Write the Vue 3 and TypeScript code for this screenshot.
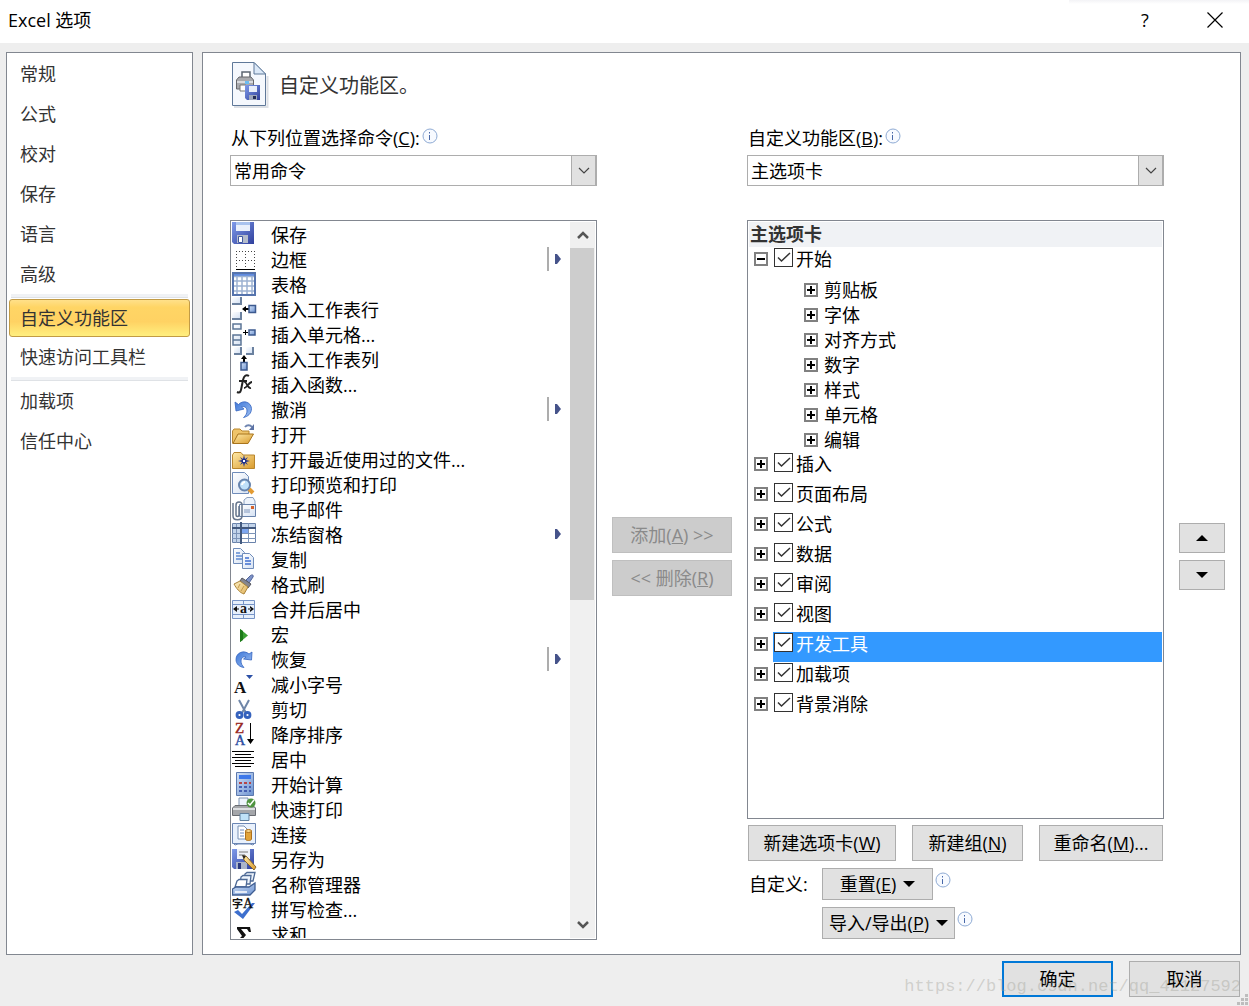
<script setup lang="ts">
import { ref } from 'vue'

interface Command {
  label: string
  icon: string
  menu?: 'split' | 'plain'
}

interface Tab {
  label: string
  checked: boolean
  groups?: string[]
}

const navGroups: string[][] = [
  ['常规', '公式', '校对', '保存', '语言', '高级'],
  ['自定义功能区', '快速访问工具栏'],
  ['加载项', '信任中心'],
]
const activeNav = ref('自定义功能区')

const folder = '<path d="M.5 8L2 5.500H9L11 8H22.500V21.500H.5Z" fill="url(#gold)" stroke="#b8862e"/>'
const page = (x: number, y: number, w: number, h: number): string =>
  `<path d="M${x} ${y}h${w - 4}l4 4v${h - 4}h-${w}z" fill="url(#paper)" stroke="#6f8cba"/>`
const cell = (x: number, y: number, w: number, h: number): string =>
  `<path d="M${x} ${y}h${w}v${h}h-${w}z" fill="#6b819f"/><path d="M${x} ${y}h${w - 2}v${h - 2}h-${w - 2}z" fill="url(#paper)"/>`

const commands: Command[] = [
  {
    label: '保存',
    icon: '<path d="M0 0H22V22H2L0 20Z" fill="url(#blue)"/><path d="M4 0H18V9H4Z" fill="#e9f0fb"/><path d="M4 0H18V3H4Z" fill="#a9c3ee"/><path d="M5 13H16V21H5Z" fill="#b4bccb"/><path d="M6.500 14.500H10.500V20.500H6.500Z" fill="#fff" stroke="#4059a0"/>',
  },
  {
    label: '边框',
    icon: '<path d="M4 4.500H23M4 13.500H23M4.500 4V21M13.500 4V21M22.500 4V21" stroke="#444" stroke-dasharray="1 2" fill="none"/><path d="M4 22H23V23H4Z" fill="#000"/>',
  },
  {
    label: '表格',
    icon: '<path d="M1 1H23V23H1Z" fill="#fff"/><path d="M0 0H24V4H0Z" fill="#5f8adf"/><path d="M0 4.500H24M0 9H24M0 14H24M0 19H24M5 4V24M10 4V24M15 4V24M20 4V24" stroke="#9db2d2" stroke-width="1.500" fill="none"/><path d="M1 1H23V23H1Z" fill="none" stroke="#5674ad" stroke-width="2"/>',
  },
  {
    label: '插入工作表行',
    icon: cell(0, 0, 10, 8) + cell(0, 15, 10, 8) + '<path d="M10 12L14 9V11H17V13H14V15Z" fill="#000"/><path d="M17 8.500H23.500V15.500H17Z" fill="url(#sky)" stroke="#3c5a8f" stroke-width="1.500"/>',
  },
  {
    label: '插入单元格...',
    icon: '<path d="M1 2H9V7H1ZM1 13H9V18H1ZM1 18H9V23H1Z" fill="url(#paper)" stroke="#5c7596" stroke-width="1.500"/><path d="M11 10H16V11H11ZM13 8H14V13H13Z" fill="#000"/><path d="M17 8H23V13H17Z" fill="url(#sky)" stroke="#3c5a8f" stroke-width="1.500"/>',
  },
  {
    label: '插入工作表列',
    icon: cell(2, 0, 8, 8) + cell(14, 0, 8, 8) + '<path d="M12 8L9 12H11V15H13V12H15Z" fill="#000"/><path d="M9 15.500H15V23H9Z" fill="url(#sky)" stroke="#3c5a8f" stroke-width="1.500"/>',
  },
  {
    label: '插入函数...',
    icon: '<path d="M5 20C9 22 9 18 10 13L11 8C12 4 14 2 17 4M7 9H15" stroke="#222" fill="none" stroke-width="2"/><path d="M12 10C15 9 15 17 19 16M20 10C17 10 15 16 12 16" stroke="#222" fill="none" stroke-width="1.800"/>',
  },
  {
    label: '撤消',
    icon: '<path d="M3 5L4 14L12 12L9.500 10C12 9 15 10 15 14C15 16.500 13.500 19 11.500 20.500C16 19.500 19.500 16.500 19.500 11.500C19 5 11 2.500 6.500 7.500Z" fill="url(#arrow)" stroke="#3565c0" stroke-width=".8"/>',
  },
  {
    label: '打开',
    icon: '<path d="M.5 21.500V9L2 7H8L10 9H17V12" fill="#efc46a" stroke="#b8862e"/><path d="M1 21.500L6 12H21.500L16 21.500Z" fill="url(#gold)" stroke="#a8741c"/><path d="M13 5C15 2.500 18 2.500 20 5" fill="none" stroke="#6e84b0" stroke-width="2"/><path d="M22 2V8H17Z" fill="#5b72a4"/>',
  },
  {
    label: '打开最近使用过的文件...',
    icon: folder + '<path d="M12 8L13 12L16 10L14 13L18 14L14 15L16 18L13 16L12 20L11 16L8 18L10 15L6 14L10 13L8 10L11 12Z" fill="#1f318e"/><path d="M11 13H13V15H11Z" fill="#fff"/>',
  },
  {
    label: '打印预览和打印',
    icon: page(0.5, 0.5, 16, 21) + '<path d="M17 17L21 21" stroke="#e39b32" stroke-width="4"/><circle cx="12.500" cy="13" r="5.500" fill="#bfe0fa" stroke="#6684ae" stroke-width="2"/><path d="M10 13C10 11 12 10 13 10" stroke="#fff" fill="none" stroke-width="2"/>',
  },
  {
    label: '电子邮件',
    icon: '<path d="M12 3L15 .5H21L23 4V10H12Z" fill="#edf3fb" stroke="#8aa0c0"/><path d="M7.500 7.500H23.500V19.500H7.500Z" fill="url(#paper)" stroke="#6882ab"/><path d="M19 9H22V12H19Z" fill="#d5622a"/><path d="M12 13H18M12 15H18" stroke="#8097bd"/><path d="M1 6V19C1 24 10 24 10 19V8C10 4 4 4 4 8V18C4 20 7 20 7 18V9" fill="none" stroke="#66758c" stroke-width="1.500"/>',
  },
  {
    label: '冻结窗格',
    menu: 'plain',
    icon: '<path d="M.5 1.500H23.500V20.500H.5Z" fill="#fff" stroke="#6a83ab"/><path d="M1 2H23V6H1ZM1 2H8V20H1Z" fill="#c3d4ea"/><path d="M10 7H17V11H10Z" fill="#7da6f0"/><path d="M0 6.500H24M0 11.500H24M0 16.500H24M4.500 1V21M16.500 1V21" stroke="#7d94b8" fill="none"/><path d="M8 0H10V22H8ZM0 5H24V7H0Z" fill="#43597e"/>',
  },
  {
    label: '复制',
    icon: page(1.5, 1.5, 11, 15) + '<path d="M4 6H8M4 9H10M4 12H10" stroke="#5f8ad2" stroke-width="1.500"/>' + page(10.5, 6.5, 11, 15) + '<path d="M13 11H17M13 14H19M13 17H19" stroke="#3f6fd0" stroke-width="1.500"/>',
  },
  {
    label: '格式刷',
    icon: '<path d="M14 8L18 4C20 2 22 3 21 5L17 11Z" fill="#7d92c8" stroke="#52659a"/><path d="M10 6L19 12L16 16L8 9Z" fill="#85868f" stroke="#55565e"/><path d="M8 9L16 15L12 22C8 21 4 16 2 12Z" fill="url(#straw)" stroke="#a98238"/><path d="M8 12L6 16M12 14L9 19" stroke="#c49a4c"/>',
  },
  {
    label: '合并后居中',
    icon: '<path d="M.5 3.500H22.500V21.500H.5Z" fill="#e6effb" stroke="#7794c6"/><path d="M0 7.500H23M0 17.500H23M11.500 3V7M11.500 18V21" stroke="#7794c6"/><path d="M1 12L5 9V15ZM22 12L18 9V15ZM4 11.500H7V12.500H4ZM16 11.500H19V12.500H16Z" fill="#111"/><text x="8" y="16" font-family="Liberation Serif, serif" font-size="14" font-weight="bold" fill="#111">a</text>',
  },
  {
    label: '宏',
    icon: '<path d="M8 7L16 13.500L8 20Z" fill="#3aa033"/><path d="M8 7L11 9V18L8 20Z" fill="#1d7a19"/>',
  },
  {
    label: '恢复',
    icon: '<path d="M20 5L19.500 13L11.500 12L14 10C11.500 9 9 11 9 14C9 16.500 10 18.500 12 20.500C7.500 20 4 17 4 12.500C4 5.500 12 2.500 17 7Z" fill="url(#arrow)" stroke="#3565c0" stroke-width=".8"/>',
  },
  {
    label: '减小字号',
    icon: '<text x="2" y="21" font-family="Liberation Serif, serif" font-size="17" font-weight="bold" fill="#111">A</text><path d="M14 3H21L17.500 7Z" fill="#2c50a6"/>',
  },
  {
    label: '剪切',
    icon: '<path d="M7 3L14 16M17 3L10 16" stroke="#6f86a8" stroke-width="2"/><circle cx="7.500" cy="18" r="2.500" fill="none" stroke="#3562bd" stroke-width="2.800"/><circle cx="15.500" cy="18" r="2.500" fill="none" stroke="#3562bd" stroke-width="2.800"/>',
  },
  {
    label: '降序排序',
    icon: '<text x="3" y="11" font-family="Liberation Serif, serif" font-size="15" fill="#99271f" stroke="#99271f" stroke-width=".4">Z</text><text x="3" y="23" font-family="Liberation Serif, serif" font-size="14" fill="#2a4ba0" stroke="#2a4ba0" stroke-width=".4">A</text><path d="M18 1H19V17H22L18.500 22L15 17H18Z" fill="#000"/>',
  },
  {
    label: '居中',
    icon: '<path d="M0 4.500H22M3 7.500H19M0 10.500H22M3 13.500H19M0 16.500H22M3 19.500H19" stroke="#000"/>',
  },
  {
    label: '开始计算',
    icon: '<path d="M4.500 .5H21.500V23.500H4.500Z" fill="url(#sky)" stroke="#5c79ae"/><path d="M7 3H19V7H7Z" fill="#3d78ea"/><path d="M7 10H10V12H7ZM12 10H15V12H12ZM17 10H19V12H17Z" fill="#b54646"/><path d="M7 14H10V16H7ZM12 14H15V16H12ZM17 14H19V16H17ZM7 18H10V20H7ZM12 18H15V20H12ZM17 18H19V20H17Z" fill="#4560b2"/>',
  },
  {
    label: '快速打印',
    icon: '<path d="M7 1H16V9H7Z" fill="#eef4fc" stroke="#7f93b0"/><path d="M3 8.500H21L23.500 11V18.500H.5V11Z" fill="#a4a6aa" stroke="#696c72"/><path d="M1 12H23" stroke="#dddfe2" stroke-width="2"/><path d="M8 16.500H17V23.500H8Z" fill="#bfe2f8" stroke="#62819f"/><circle cx="19" cy="6" r="4.500" fill="#4f9440"/><path d="M16 6L18 8L22 3" fill="none" stroke="#fff" stroke-width="1.500"/>',
  },
  {
    label: '连接',
    icon: '<path d="M.5 1.500H23.500V21.500H.5Z" fill="#e9f1fc" stroke="#6b86b4"/><path d="M1 21L3 23L6 22H18L21 23L23 21" fill="none" stroke="#6b86b4"/><path d="M6 4H12L15 7V17H6Z" fill="#fff" stroke="#7790b5"/><path d="M8 8H12M8 11H12M8 14H12" stroke="#6e8ac0"/><path d="M13.500 9V17C13.500 19 19.500 19 19.500 17V9Z" fill="#e2a33a" stroke="#ad701d"/><ellipse cx="16.500" cy="9" rx="3" ry="1.500" fill="#f7d58c" stroke="#ad701d"/>',
  },
  {
    label: '另存为',
    icon: '<path d="M0 2H22V22H2L0 20Z" fill="url(#blue)"/><path d="M5 2H18V12H5Z" fill="#eef2fa"/><path d="M7 5H16M7 8H13" stroke="#777"/><path d="M4 15H15V22H4Z" fill="#aab4ca"/><path d="M6 16H9V22H6Z" fill="#28377c"/><path d="M11 9L14 9L24 20L22 23L12 13Z" fill="url(#gold)" stroke="#8e6a2a"/><path d="M10 8L14 9L12 12Z" fill="#222"/>',
  },
  {
    label: '名称管理器',
    icon: '<path d="M13 2L15 .5H23L21 9H12Z" fill="#eef4fc" stroke="#4d6995" stroke-width="1.300"/><path d="M9 5L11 3.500H19L18 12H8Z" fill="#eef4fc" stroke="#4d6995" stroke-width="1.300"/><path d="M5 9L7 7.500H15L14 15H3Z" fill="#fff" stroke="#4d6995" stroke-width="1.300"/><path d="M.5 17L4 15H17L23 11V18L18 23H.5Z" fill="url(#sky)" stroke="#3f5e92" stroke-width="1.300"/><path d="M3 20H15" stroke="#fff" stroke-width="1.500"/>',
  },
  {
    label: '拼写检查...',
    icon: '<path d="M2 15L6 13L10 17L20 6H23L11 22Z" fill="#3d6fce"/><text x="0" y="11" font-family="Noto Sans CJK SC, sans-serif" font-size="11" font-weight="bold" fill="#111">字</text><text x="11" y="11" font-family="Liberation Serif, serif" font-size="14" fill="#111" stroke="#111" stroke-width=".3">A</text>',
  },
  {
    label: '求和',
    icon: '<path d="M5 5H18L19 10H17L15 7H9L14 13L9 19H16L18 16H20L18 22H4V20L10 14L5 7Z" fill="#111"/>',
  },
]

const splitCommands = ['边框', '撤消', '恢复']

const tabs = ref<Tab[]>([
  { label: '开始', checked: true, groups: ['剪贴板', '字体', '对齐方式', '数字', '样式', '单元格', '编辑'] },
  { label: '插入', checked: true },
  { label: '页面布局', checked: true },
  { label: '公式', checked: true },
  { label: '数据', checked: true },
  { label: '审阅', checked: true },
  { label: '视图', checked: true },
  { label: '开发工具', checked: true },
  { label: '加载项', checked: true },
  { label: '背景消除', checked: true },
])
const selectedTab = ref('开发工具')
</script>

<template>
  <div class="dialog">
    <svg class="defs" aria-hidden="true">
      <defs>
        <linearGradient id="gold" x1="0" y1="0" x2="1" y2="1">
          <stop offset="0" stop-color="#ffeaa8" /><stop offset="1" stop-color="#d99a2c" />
        </linearGradient>
        <linearGradient id="straw" x1="0" y1="0" x2="1" y2="1">
          <stop offset="0" stop-color="#fdf0c4" /><stop offset="1" stop-color="#e0b25a" />
        </linearGradient>
        <linearGradient id="blue" x1="0" y1="0" x2="1" y2="1">
          <stop offset="0" stop-color="#7f9bea" /><stop offset="1" stop-color="#2f3f9c" />
        </linearGradient>
        <linearGradient id="arrow" x1="0" y1="0" x2="1" y2="1">
          <stop offset="0" stop-color="#3f78d8" /><stop offset="1" stop-color="#9dbff2" />
        </linearGradient>
        <linearGradient id="sky" x1="0" y1="0" x2="1" y2="1">
          <stop offset="0" stop-color="#d3e2f7" /><stop offset="1" stop-color="#6c92d0" />
        </linearGradient>
        <linearGradient id="paper" x1="0" y1="0" x2="1" y2="1">
          <stop offset="0" stop-color="#ffffff" /><stop offset="1" stop-color="#d6e2f3" />
        </linearGradient>
      </defs>
    </svg>

    <header class="titlebar">
      <h1>Excel 选项</h1>
      <button type="button" class="title-btn" aria-label="帮助">?</button>
      <button type="button" class="title-btn" aria-label="关闭">
        <svg width="16" height="16" viewBox="0 0 16 16"><path d="M.5 .5L15.500 15.500M15.500 .5L.5 15.500" stroke="#000" stroke-width="1.200" /></svg>
      </button>
    </header>

    <div class="body">
      <nav class="sidebar">
        <div v-for="(group, gi) in navGroups" :key="gi" class="nav-group">
          <button
            v-for="item in group"
            :key="item"
            type="button"
            class="nav-item"
            :class="{ active: item === activeNav }"
            @click="activeNav = item"
          >{{ item }}</button>
        </div>
      </nav>

      <main class="content">
        <div class="heading">
          <svg width="37" height="47" viewBox="0 0 37 47">
            <path d="M2 46H35.500V15" fill="none" stroke="#dde0e5" stroke-width="2" />
            <path d="M.5 1.500H22L33.500 13V44.500H.5Z" fill="#f5f8fd" stroke="#5f7899" />
            <path d="M22 1.500V13H33.500Z" fill="#dce9f8" stroke="#5f7899" />
            <path d="M10 11H18V19H10Z" fill="#fff" stroke="#5b6470" stroke-width="1.500" />
            <path d="M4.500 19L7 16H19L21.500 19V28H4.500Z" fill="#a9aaae" stroke="#66676b" />
            <path d="M5 21H21" stroke="#dadbde" stroke-width="2" />
            <path d="M8 24H14V30H8Z" fill="#fff" stroke="#777" />
            <path d="M13 20H17V23H13Z" fill="#6bbcf2" />
            <path d="M13 24H28V39H15L13 37Z" fill="url(#blue)" />
            <path d="M17 25H25V31H17Z" fill="#e8eefa" />
            <path d="M17 34H25V39H17Z" fill="#9da6bb" /><path d="M21 35H24V38H21Z" fill="#222c55" />
          </svg>
          <h2>自定义功能区。</h2>
        </div>

        <div class="columns">
          <section class="column">
            <div class="label-row">
              <label for="command-source">从下列位置选择命令(<u>C</u>):</label>
              <svg class="info" viewBox="0 0 16 16"><circle cx="8" cy="8" r="7" /><path d="M7.500 4V5.500M7.500 7V12" /></svg>
            </div>
            <div class="combo">
              <select id="command-source"><option>常用命令</option></select>
              <span class="combo-arrow"><svg width="12" height="8" viewBox="0 0 12 8"><path d="M1 1L6 6L11 1" /></svg></span>
            </div>
            <div class="command-list">
              <ul>
                <li v-for="cmd in commands" :key="cmd.label">
                  <svg class="cmd-icon" viewBox="0 0 24 24" v-html="cmd.icon"></svg>
                  <span class="cmd-label">{{ cmd.label }}</span>
                  <span v-if="cmd.menu || splitCommands.includes(cmd.label)" class="flyout" :class="{ split: cmd.menu !== 'plain' }">
                    <svg width="6" height="10" viewBox="0 0 6 10"><path d="M0 0H2L6 5L2 10H0Z" fill="#46538a" /></svg>
                  </span>
                </li>
              </ul>
              <div class="scrollbar">
                <button type="button" aria-label="向上滚动"><svg width="12" height="10" viewBox="0 0 12 10"><path d="M1 8L6 3L11 8" /></svg></button>
                <div class="track"><div class="thumb"></div></div>
                <button type="button" aria-label="向下滚动"><svg width="12" height="10" viewBox="0 0 12 10"><path d="M1 2L6 7L11 2" /></svg></button>
              </div>
            </div>
          </section>

          <div class="side-buttons">
            <button type="button" class="btn" disabled>添加(<u>A</u>) &gt;&gt;</button>
            <button type="button" class="btn" disabled>&lt;&lt; 删除(<u>R</u>)</button>
          </div>

          <section class="column">
            <div class="label-row">
              <label for="ribbon-scope">自定义功能区(<u>B</u>):</label>
              <svg class="info" viewBox="0 0 16 16"><circle cx="8" cy="8" r="7" /><path d="M7.500 4V5.500M7.500 7V12" /></svg>
            </div>
            <div class="combo">
              <select id="ribbon-scope"><option>主选项卡</option></select>
              <span class="combo-arrow"><svg width="12" height="8" viewBox="0 0 12 8"><path d="M1 1L6 6L11 1" /></svg></span>
            </div>
            <div class="tree">
              <div class="tree-head">主选项卡</div>
              <ul>
                <li v-for="(tab, ti) in tabs" :key="tab.label">
                  <div class="tab-row">
                    <button type="button" class="expander" :class="{ open: tab.groups }" :aria-label="'展开' + tab.label"></button>
                    <div class="tab-body" :class="{ selected: tab.label === selectedTab }" @click="selectedTab = tab.label">
                      <input :id="'tab-' + ti" v-model="tab.checked" type="checkbox" />
                      <label :for="'tab-' + ti">{{ tab.label }}</label>
                    </div>
                  </div>
                  <ul v-if="tab.groups" class="groups">
                    <li v-for="group in tab.groups" :key="group">
                      <button type="button" class="expander" :aria-label="'展开' + group"></button>
                      <span>{{ group }}</span>
                    </li>
                  </ul>
                </li>
              </ul>
            </div>
            <div class="tree-actions">
              <button type="button" class="btn w148">新建选项卡(<u>W</u>)</button>
              <button type="button" class="btn w111">新建组(<u>N</u>)</button>
              <button type="button" class="btn w124">重命名(<u>M</u>)...</button>
            </div>
            <div class="custom-actions">
              <span class="custom-label">自定义:</span>
              <div class="custom-item">
                <button type="button" class="btn short w111">重置(<u>E</u>)<i class="caret down"></i></button>
                <svg class="info" viewBox="0 0 16 16"><circle cx="8" cy="8" r="7" /><path d="M7.500 4V5.500M7.500 7V12" /></svg>
              </div>
              <div class="custom-item">
                <button type="button" class="btn short w133">导入/导出(<u>P</u>)<i class="caret down"></i></button>
                <svg class="info" viewBox="0 0 16 16"><circle cx="8" cy="8" r="7" /><path d="M7.500 4V5.500M7.500 7V12" /></svg>
              </div>
            </div>
          </section>

          <div class="side-buttons">
            <button type="button" class="btn move" aria-label="上移"><i class="caret up"></i></button>
            <button type="button" class="btn move" aria-label="下移"><i class="caret down"></i></button>
          </div>
        </div>
      </main>
    </div>

    <footer class="footer">
      <button type="button" class="btn w111 primary">确定</button>
      <button type="button" class="btn w111">取消</button>
      <span class="watermark">https://blog.csdn.net/qq_42127592</span>
      <svg class="grip" width="12" height="12" viewBox="0 0 12 12"><path d="M8 0H11V3H8ZM4 4H7V7H4ZM8 4H11V7H8ZM0 8H3V11H0ZM4 8H7V11H4ZM8 8H11V11H8Z" fill="#bdbdbd" /></svg>
    </footer>
  </div>
</template>

<style>
body {
  margin: 0;
}
</style>

<style scoped>
* {
  box-sizing: border-box;
}

.dialog {
  display: flex;
  flex-direction: column;
  height: 100vh;
  min-height: 700px;
  background: #eee;
  color: #000;
  font: 18px/24px "Open Sans", "Noto Sans CJK SC", sans-serif;
}

.defs {
  position: absolute;
  width: 0;
  height: 0;
}

button,
select {
  padding: 0;
  border: 0;
  font: inherit;
  color: inherit;
}

ul {
  margin: 0;
  padding: 0;
  list-style: none;
}

.titlebar {
  flex: none;
  display: flex;
  align-items: center;
  height: 43px;
  padding: 0 9px 0 8px;
  background: linear-gradient(#f3f3f6, #fff) right top / 180px 4px no-repeat #fff;
}

.titlebar h1 {
  flex: 1;
  margin: 0;
  padding-bottom: 4px;
  font-size: 18px;
  font-weight: 400;
}

.title-btn {
  display: flex;
  align-items: center;
  justify-content: center;
  width: 50px;
  height: 39px;
  margin-bottom: 4px;
  background: none;
}

.title-btn + .title-btn {
  margin-left: 20px;
}

.body {
  flex: 1;
  display: flex;
  gap: 9px;
  min-height: 0;
  padding: 9px 8px 0 6px;
}

.sidebar {
  flex: none;
  width: 187px;
  padding: 1px 2px;
  border: 1px solid #828790;
  background: #fff;
}

.nav-group {
  display: flex;
  flex-direction: column;
  color: #333;
}

.nav-group + .nav-group::before {
  content: "";
  height: 3px;
  margin: 0 2px;
  border-bottom: 1px solid #dfe2e6;
  background: #f0f2f5;
}

.nav-item {
  height: 40px;
  padding-left: 11px;
  border-radius: 3px;
  background: none;
  text-align: left;
}

.nav-item.active {
  height: 38px;
  margin: 1px 0 0;
  padding-left: 10px;
  border: 1px solid #c29b45;
  background: linear-gradient(#ffe08a, #ffd565 20%, #ffd263 60%, #ffef7f);
}

.content {
  flex: 1;
  display: flex;
  flex-direction: column;
  min-width: 0;
  padding: 8px 15px 14px 27px;
  border: 1px solid #828790;
  background: #fff;
}

.heading {
  flex: none;
  display: flex;
  align-items: center;
  gap: 10px;
  height: 47px;
  padding-left: 2px;
  margin-bottom: 16px;
}

.heading h2 {
  margin: 0;
  padding-top: 3px;
  color: #333;
  font-size: 20px;
  font-weight: 400;
}

.columns {
  flex: 1;
  display: grid;
  grid-template-columns: 367fr 120px 417fr 46px;
  grid-template-rows: minmax(0, 1fr);
  gap: 15px;
  min-height: 0;
}

.column {
  display: flex;
  flex-direction: column;
  min-width: 0;
}

.label-row {
  flex: none;
  display: flex;
  gap: 2px;
  height: 31px;
  padding-left: 1px;
  line-height: 28px;
}

.info {
  width: 16px;
  height: 16px;
  margin-top: 4px;
  fill: #f7faff;
  stroke: #8fabd4;
}

.info path {
  stroke: #4868a8;
}

.combo {
  position: relative;
  flex: none;
  height: 31px;
  margin-bottom: 34px;
}

.combo select {
  width: 100%;
  height: 31px;
  padding: 0 30px 0 3px;
  border: 1px solid #adadad;
  border-radius: 0;
  background: #fff;
  appearance: none;
}

.combo-arrow {
  position: absolute;
  top: 0;
  right: 0;
  display: flex;
  align-items: center;
  justify-content: center;
  width: 26px;
  height: 31px;
  border: 1px solid #adadad;
  border-right-width: 2px;
  background: #e1e1e1;
  pointer-events: none;
}

.combo-arrow path {
  fill: none;
  stroke: #444;
  stroke-width: 1.2;
}

.command-list {
  flex: 1;
  display: flex;
  min-height: 0;
  padding: 1px;
  border: 1px solid #828790;
  overflow: hidden;
}

.command-list ul {
  flex: 1;
  overflow: hidden;
}

.command-list li {
  display: flex;
  align-items: center;
  height: 25px;
  white-space: nowrap;
}

.cmd-icon {
  flex: none;
  width: 24px;
  height: 24px;
  margin: 0 15px 1px 0;
  overflow: visible;
}

.cmd-label {
  flex: 1;
}

.flyout {
  display: flex;
  align-items: center;
  height: 24px;
  margin-bottom: 1px;
  padding: 0 9px 0 6px;
}

.flyout.split {
  border-left: 2px solid #adadad;
}

.scrollbar {
  flex: none;
  display: flex;
  flex-direction: column;
  width: 25px;
  background: #f0f0f0;
}

.scrollbar button {
  display: flex;
  align-items: center;
  justify-content: center;
  height: 26px;
  background: none;
}

.scrollbar path {
  fill: none;
  stroke: #555;
  stroke-width: 2.5;
}

.track {
  flex: 1;
  padding-right: 1px;
}

.thumb {
  height: 53%;
  background: #cdcdcd;
}

.side-buttons {
  display: flex;
  flex-direction: column;
  justify-content: center;
  gap: 7px;
  padding-top: 49px;
}

.btn {
  height: 36px;
  border: 1px solid #adadad;
  background: #e1e1e1;
  white-space: nowrap;
}

.btn:disabled {
  border-color: #bfbfbf;
  background: #ccc;
  color: #8a8a8a;
}

.btn.primary {
  border: 2px solid #0078d7;
}

.btn.move,
.btn.short {
  display: flex;
  align-items: center;
  justify-content: center;
}

.btn.move {
  height: 30px;
}

.btn.short {
  height: 32px;
}

.w111 {
  width: 111px;
}

.w124 {
  width: 124px;
}

.w133 {
  width: 133px;
}

.w148 {
  width: 148px;
}

.caret {
  width: 0;
  height: 0;
  border: 6px solid transparent;
}

.caret.down {
  border-top-color: #000;
  border-bottom-width: 0;
}

.caret.up {
  border-bottom-color: #000;
  border-top-width: 0;
}

.short .caret {
  margin-left: 7px;
}

.tree {
  flex: 1;
  min-height: 0;
  padding: 1px;
  border: 1px solid #828790;
  overflow: hidden;
}

.tree-head {
  height: 25px;
  padding-left: 1px;
  background: #f0f2f5;
  color: #333;
  font-weight: 700;
}

.tab-row {
  display: flex;
  height: 30px;
  padding-left: 5px;
}

.expander {
  flex: none;
  width: 14px;
  height: 14px;
  border: 2px solid #808080;
  background:
    linear-gradient(#000, #000) center / 8px 2px no-repeat,
    linear-gradient(#000, #000) center / 2px 8px no-repeat,
    #fff;
}

.expander.open {
  background: linear-gradient(#000, #000) center / 8px 2px no-repeat #fff;
}

.tab-row .expander {
  margin: 5px 5px 0 0;
}

.tab-body {
  flex: 1;
  display: flex;
  align-items: flex-start;
  padding: 1px;
  line-height: 22px;
}

.tab-body.selected {
  background: #3399ff;
  color: #fff;
}

.tab-body input {
  flex: none;
  width: 19px;
  height: 19px;
  margin: 0 3px 0 0;
  border: 1px solid #333;
  background: #fff;
  appearance: none;
}

.tab-body input:checked {
  background: #fff url("data:image/svg+xml,%3Csvg xmlns='http://www.w3.org/2000/svg' viewBox='0 0 17 17'%3E%3Cpath d='M3 8.500L6.500 12L15 4' fill='none' stroke='%23333' stroke-width='1.500'/%3E%3C/svg%3E") center / 17px no-repeat;
}

.groups li {
  display: flex;
  align-items: center;
  gap: 6px;
  height: 25px;
  padding-left: 55px;
}

.tree-actions {
  flex: none;
  display: flex;
  justify-content: space-between;
  margin: 6px 1px 7px;
}

.custom-actions {
  flex: none;
  display: grid;
  grid-template-columns: 73px 1fr;
  row-gap: 7px;
  padding: 0 0 1px 2px;
}

.custom-label {
  line-height: 32px;
}

.custom-item {
  grid-column: 2;
  display: flex;
  gap: 2px;
}

.footer {
  position: relative;
  flex: none;
  display: flex;
  justify-content: flex-end;
  gap: 16px;
  height: 51px;
  padding: 6px 9px 9px;
}

.watermark {
  position: absolute;
  right: 8px;
  bottom: 7px;
  color: rgba(160, 160, 150, 0.4);
  font: 17px/24px "Liberation Mono", monospace;
  pointer-events: none;
}

.grip {
  position: absolute;
  right: 0;
  bottom: 0;
}
</style>
